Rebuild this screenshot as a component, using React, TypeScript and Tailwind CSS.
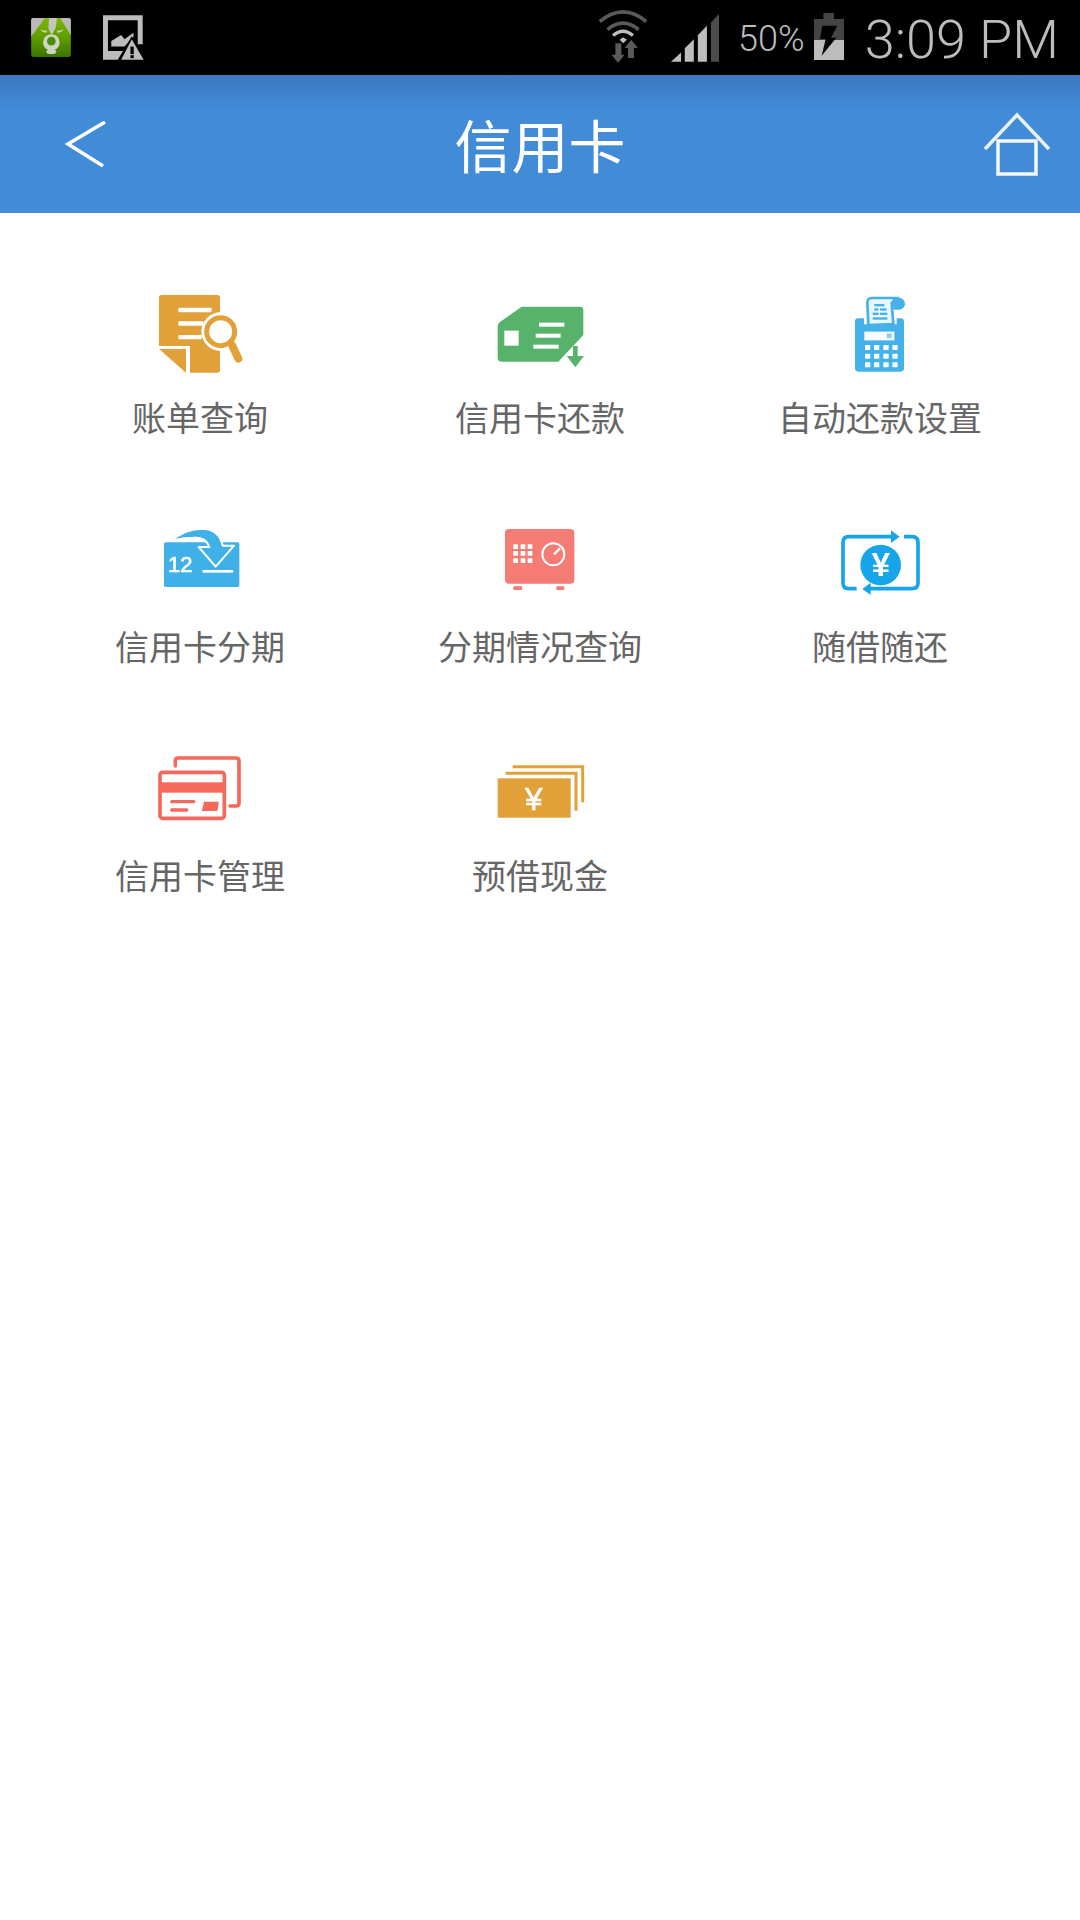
import React from "react";

const cjk = "font-['Noto_Sans_CJK_SC','Noto_Sans',sans-serif]";

function Ic({ vb, children }: { vb: string; children: React.ReactNode }) {
  return (
    <svg viewBox={vb} width={100} height={100} className="block overflow-visible blur-[0.6px]">
      {children}
    </svg>
  );
}

const Bill = () => (
  <Ic vb="60 12 300 300">
    <path d="M87 53q0-8 8-8H262q8 0 8 8V270q0 8-8 8H180V198H87Z" fill="#e2a038" />
    <path d="M87 207H168V278Z" fill="#e2a038" />
    <rect x="145" y="83" width="100" height="14" rx="3" fill="#fff" />
    <rect x="145" y="124" width="75" height="13" rx="3" fill="#fff" />
    <rect x="145" y="165" width="70" height="13" rx="3" fill="#fff" />
    <circle cx="272" cy="155" r="58" fill="#fff" />
    <circle cx="272" cy="155" r="42" fill="#fff" stroke="#e2a038" strokeWidth="15" />
    <path d="M307 197L325 236" stroke="#e2a038" strokeWidth="24" strokeLinecap="round" />
  </Ic>
);
const Repay = () => (
  <Ic vb="30 12 300 300">
    <path d="M125 80H300q10 0 10 10V165L235 245H65q-12 0-12-12V137q0-6 6-10Z" fill="#57b36c" />
    <rect x="73" y="152" width="43" height="45" fill="#fff" />
    <rect x="177" y="128" width="76" height="12" fill="#fff" />
    <rect x="167" y="161" width="75" height="12" fill="#fff" />
    <rect x="160" y="194" width="76" height="12" fill="#fff" />
    <rect x="279" y="198" width="14" height="32" fill="#57b36c" />
    <path d="M260 228H312L286 262Z" fill="#57b36c" />
  </Ic>
);
const Pos = () => {
  const xs = [105, 132, 160, 187];
  const ys = [195, 221, 247];
  return (
    <Ic vb="0 12 300 300">
      <path d="M85 115H102V133H200V115H212q10 0 10 10V265q0 10-10 10H85q-10 0-10-10V125q0-10 10-10Z" fill="#45b1ea" />
      <path d="M115 135L112 68q0-14 14-14H200L185 70L190 132Z" fill="#eaf6fd" stroke="#45b1ea" strokeWidth="8" />
      <path d="M188 53H208q17 3 17 20q-2 14-17 16H190Z" fill="#45b1ea" />
      <g fill="#45b1ea">
        <rect x="133" y="72" width="30" height="7" />
        <rect x="133" y="85" width="12" height="7" />
        <rect x="150" y="85" width="20" height="7" />
        <rect x="128" y="98" width="18" height="7" />
        <rect x="150" y="98" width="22" height="7" />
        <rect x="128" y="112" width="44" height="7" />
      </g>
      <rect x="103" y="155" width="90" height="26" fill="#fff" />
      <rect x="170" y="160" width="15" height="15" fill="#8fd0f2" />
      {ys.map((y) =>
        xs.map((x) => <rect key={`${x}-${y}`} x={x} y={y} width="16" height="15" rx="2" fill="#fff" />),
      )}
    </Ic>
  );
};
const Install = () => (
  <Ic vb="0 -6 300 300">
    <rect x="42" y="82" width="226" height="134" rx="5" fill="#3fb0e8" />
    <path d="M66 78Q100 42 160 41Q208 44 218 92H252L197 155L146 96H178Q168 66 130 68Q96 68 66 78Z" fill="#3fb0e8" stroke="#fff" strokeWidth="6" strokeLinejoin="round" />
    <rect x="158" y="165" width="92" height="8" fill="#fff" />
    <text x="54" y="170" fontSize="66" stroke="#fff" strokeWidth="2" fill="#fff" fontFamily="'Liberation Sans',sans-serif">12</text>
  </Ic>
);
const Safe = () => {
  const xs = [70, 92, 113];
  const ys = [88, 108, 130];
  return (
    <Ic vb="0 -6 300 300">
      <rect x="45" y="42" width="208" height="164" rx="12" fill="#f47c74" />
      <rect x="70" y="214" width="26" height="11" rx="2" fill="#f47c74" />
      <rect x="199" y="214" width="24" height="11" rx="2" fill="#f47c74" />
      {ys.map((y) =>
        xs.map((x) => <rect key={`${x}-${y}`} x={x} y={y} width="14" height="14" rx="1" fill="#fff" />),
      )}
      <circle cx="190" cy="118" r="33" fill="none" stroke="#fff" strokeWidth="6" />
      <path d="M192 118L210 100" stroke="#fff" strokeWidth="7" />
    </Ic>
  );
};
const Cycle = () => (
  <Ic vb="0 -6 300 300">
    <path d="M185 65H56q-17 0-17 17V204q0 17 17 17H80" fill="none" stroke="#16a5e8" strokeWidth="11" />
    <path d="M222 65H246q18 0 18 17V204q0 17-18 17H120" fill="none" stroke="#16a5e8" strokeWidth="11" />
    <path d="M183 46L209 65L183 84Z" fill="#16a5e8" />
    <path d="M122 203L97 222L122 240Z" fill="#16a5e8" />
    <circle cx="152" cy="150" r="61" fill="#16a5e8" />
    <text x="152" y="182" textAnchor="middle" fontSize="100" fontWeight="700" fill="#fff" fontFamily="'Liberation Sans',sans-serif">¥</text>
  </Ic>
);
const Cards = () => (
  <Ic vb="0 -9 300 300">
    <path d="M76 63V47q0-8 8-8H258q9 0 9 9V175q0 8-8 8H240" fill="none" stroke="#f4695b" strokeWidth="11" strokeLinecap="round" />
    <rect x="30" y="82" width="193" height="138" rx="8" fill="none" stroke="#f4695b" strokeWidth="11" />
    <rect x="30" y="112" width="193" height="31" fill="#f4695b" />
    <rect x="60" y="165" width="76" height="10" rx="5" fill="#f4695b" />
    <rect x="60" y="190" width="55" height="10" rx="5" fill="#f4695b" />
    <path d="M162 170H207L202 198H155Z" fill="#f4695b" />
  </Ic>
);
const Cash = () => (
  <Ic vb="0 -9 300 300">
    <path d="M68 65H278V172" fill="none" stroke="#e2a038" strokeWidth="9" />
    <path d="M47 85H258V197" fill="none" stroke="#e2a038" strokeWidth="9" />
    <rect x="23" y="100" width="219" height="118" fill="#e2a038" />
    <text x="131" y="195" textAnchor="middle" fontSize="94" stroke="#fff" strokeWidth="2" fill="#fff" fontFamily="'Liberation Sans',sans-serif">¥</text>
  </Ic>
);

const items: { label: string; icon: React.ReactNode }[] = [
  { label: "账单查询", icon: <Bill /> },
  { label: "信用卡还款", icon: <Repay /> },
  { label: "自动还款设置", icon: <Pos /> },
  { label: "信用卡分期", icon: <Install /> },
  { label: "分期情况查询", icon: <Safe /> },
  { label: "随借随还", icon: <Cycle /> },
  { label: "信用卡管理", icon: <Cards /> },
  { label: "预借现金", icon: <Cash /> },
];

export default function App() {
  return (
    <div className={`w-[1080px] h-[1920px] bg-white ${cjk}`}>
      <div className="h-[75px] bg-black flex items-center pl-[31px] pr-[21px]">
        <svg viewBox="18 20 120 118" width={40} height={39} className="blur-[0.4px]">
          <defs>
            <linearGradient id="dg" x1="0" y1="0" x2="0" y2="1">
              <stop offset="0" stopColor="#7fb800" />
              <stop offset="0.55" stopColor="#5c9a00" />
              <stop offset="1" stopColor="#3a7400" />
            </linearGradient>
          </defs>
          <rect x="18" y="20" width="120" height="118" rx="7" fill="url(#dg)" />
          <path d="M18 27q0-7 7-7H60L18 76Z" fill="#b9b9b9" />
          <path d="M138 27q0-7-7-7H106L138 72Z" fill="#b9b9b9" />
          <path d="M72 20H96L92 50Q85 64 80 70Q74 62 70 50Z" fill="#c4c6bd" />
          <path d="M46 54Q56 60 66 58L64 65Q52 64 46 54Z" fill="#cfd6bd" />
          <path d="M116 54Q106 60 96 58L98 65Q110 64 116 54Z" fill="#cfd6bd" />
          <circle cx="79" cy="94" r="25" fill="#d0d4c6" />
          <circle cx="79" cy="90" r="13" fill="#4c8c00" />
          <ellipse cx="79" cy="122" rx="15" ry="7" fill="#cfd3c4" />
        </svg>
        <svg viewBox="235 12 124 138" width={41} height={46} className="ml-[32px] mt-[1px] blur-[0.3px]">
          <path d="M235 12H355V100H340V27H250V120H300L285 147H235Z" fill="#bdbdbd" />
          <path d="M260 107V90L290 72L300 85L327 65V78L300 107Z" fill="#bdbdbd" />
          <path d="M322 76L278 150H368Z" fill="#000" />
          <path d="M322 85L290 147H358Z" fill="#bdbdbd" />
          <rect x="318" y="107" width="10" height="23" fill="#000" />
          <rect x="318" y="133" width="10" height="9" fill="#000" />
        </svg>
        <div className="flex-1" />
        <svg viewBox="15 15 150 160" width={50} height={53} className="mb-[2px] blur-[0.3px]">
          <g fill="none">
            <path d="M20 50Q90 -8 160 50" stroke="#5a5a5a" strokeWidth="11" />
            <path d="M43 74Q90 35 137 74" stroke="#5a5a5a" strokeWidth="11" />
            <path d="M60 92Q90 66 120 92" stroke="#bdbdbd" strokeWidth="10" />
          </g>
          <path d="M80 105L90 97L102 105L90 115Z" fill="#bdbdbd" />
          <path d="M67 115H85V150H95L75 174L55 150H67Z" fill="#5a5a5a" />
          <path d="M115 105L135 130H123V160H105V130H95Z" fill="#5a5a5a" />
        </svg>
        <svg viewBox="235 25 143 143" width={48} height={48} className="ml-[23px]">
          <path d="M235 167L265 140V167Z" fill="#bdbdbd" />
          <path d="M276 167V127L303 100V167Z" fill="#bdbdbd" />
          <path d="M315 167V88L342 60V167Z" fill="#bdbdbd" />
          <path d="M354 167V50L378 25V167Z" fill="#4d4d4d" />
        </svg>
        <span className="ml-[19px] text-[36px] leading-none font-['Roboto',sans-serif] font-light text-[#bdbdbd] mt-[2px]">
          50%
        </span>
        <svg viewBox="657 22 90 141" width={30} height={47} className="ml-[9px] mb-[3px]">
          <path d="M685 40V22H717V40H747V103H657V40Z" fill="#444" />
          <path d="M657 103H747V163H657Z" fill="#bdbdbd" />
          <path d="M682 60H727L708 96H724L680 150L692 100H675Z" fill="#000" />
        </svg>
        <span className="ml-[21px] text-[54px] leading-none font-['Roboto',sans-serif] font-light text-[#bdbdbd] mt-[4px]">
          3:09 PM
        </span>
      </div>

      <div className="h-[138px] flex items-center bg-[linear-gradient(to_bottom,#3b79c0_0px,#428bd7_34px,#428bd7_100%)]">
        <div className="w-[200px] pl-[65px]">
          <svg viewBox="0 0 42 46" width={42} height={46} className="block blur-[0.4px]">
            <path d="M40 1L3 23L38 45" fill="none" stroke="#fff" strokeWidth="3.5" />
          </svg>
        </div>
        <div className="flex-1 text-center text-[57px] leading-none text-white mb-[2px]">信用卡</div>
        <div className="w-[200px] flex justify-end pr-[29px]">
          <svg viewBox="0 0 68 64" width={68} height={64} className="block blur-[0.4px]">
            <path d="M2 37L34 3L66 37" fill="none" stroke="#e8f0fa" strokeWidth="3.5" />
            <rect x="15" y="29" width="38" height="33" fill="none" stroke="#f3f7fc" strokeWidth="3.5" />
          </svg>
        </div>
      </div>

      <div className="grid grid-cols-3 px-[30px] pt-[71px]">
        {items.map((it) => (
          <div key={it.label} className="flex flex-col items-center h-[229px]">
            {it.icon}
            <div className="mt-[13px] text-[34px] leading-[40px] text-[#666666]">{it.label}</div>
          </div>
        ))}
      </div>
    </div>
  );
}
